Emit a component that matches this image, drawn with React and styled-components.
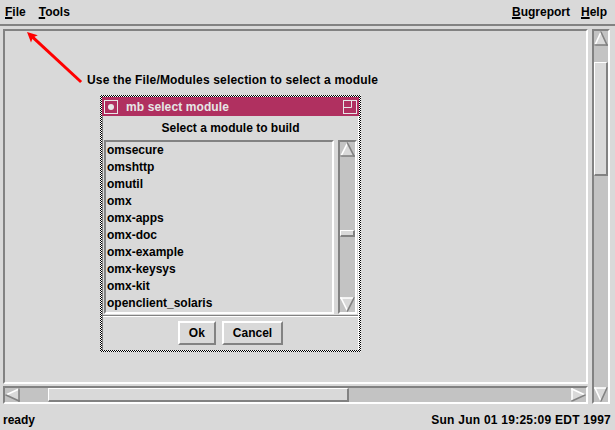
import React from 'react';
import styled, { createGlobalStyle } from 'styled-components';

const DARK = '#828282';
const LIGHT = '#ffffff';
const BG = '#d9d9d9';
const TROUGH = '#c3c3c3';
const FONT = '"Liberation Sans", Arial, Helvetica, sans-serif';

const GlobalStyle = createGlobalStyle`
  html, body { margin: 0; padding: 0; background: ${BG}; }
  body { font-family: ${FONT}; font-weight: bold; font-size: 12px; color: #000; }
  * { box-sizing: border-box; }
`;

const Screen = styled.div`
  position: relative;
  width: 615px;
  height: 430px;
  overflow: hidden;
  background: ${BG};
  display: flex;
  flex-direction: column;
`;

const MenuBar = styled.div`
  height: 26px;
  flex: none;
  border-bottom: 2px solid ${DARK};
  display: flex;
  align-items: flex-start;
  padding: 5px 8px 0 5px;
  line-height: 14px;
`;

const MenuGroup = styled.div`
  display: flex;
  gap: ${(p) => p.$gap}px;
`;

const Spacer = styled.div`
  flex: 1;
`;

const MenuItem = styled.span`
  white-space: nowrap;
`;

const Mnemonic = styled.span`
  text-decoration: underline;
  text-decoration-thickness: 2px;
  text-underline-offset: 1px;
`;

const Workspace = styled.div`
  flex: none;
  display: grid;
  grid-template-columns: 585px 18px;
  grid-template-rows: 355px 18px;
  column-gap: 4px;
  row-gap: 2px;
  padding: 3px 0 0 3px;
`;

const Canvas = styled.div`
  position: relative;
  grid-column: 1;
  grid-row: 1;
  border: 2px solid;
  border-color: ${DARK} ${LIGHT} ${LIGHT} ${DARK};
  background: ${BG};
`;

const CanvasDrawing = styled.svg`
  position: absolute;
  left: 0;
  top: 0;
  overflow: visible;
`;

const CanvasText = styled.div`
  position: absolute;
  left: ${(p) => p.$x}px;
  top: ${(p) => p.$y}px;
  line-height: 14px;
  letter-spacing: 0.17px;
  white-space: nowrap;
`;

const ScrollTrack = styled.div`
  display: flex;
  flex-direction: ${(p) => (p.$horizontal ? 'row' : 'column')};
  border: 2px solid;
  border-color: ${DARK} ${LIGHT} ${LIGHT} ${DARK};
  background: ${TROUGH};
  grid-row: ${(p) => p.$row || 'auto'};
  grid-column: ${(p) => p.$col || 'auto'};
  overflow: hidden;
`;

const Slider = styled.div`
  flex: none;
  background: ${BG};
  border-style: solid;
  border-width: 1px 2px 2px 1px;
  border-color: ${LIGHT} ${DARK} ${DARK} ${LIGHT};
  ${(p) =>
    p.$horizontal
      ? `width: ${p.$size}px; margin-left: ${p.$offset}px;`
      : `height: ${p.$size}px; margin-top: ${p.$offset}px;`}
`;

const TroughFill = styled.div`
  flex: 1;
`;

const ArrowBox = styled.svg`
  flex: none;
  display: block;
`;

const StatusBar = styled.div`
  flex: 1;
  display: flex;
  justify-content: space-between;
  padding: 9px 4px 0 3px;
  line-height: 14px;
`;

const StatusText = styled.span`
  letter-spacing: ${(p) => p.$spacing || 0}px;
  white-space: nowrap;
`;

const DialogWindow = styled.div`
  position: absolute;
  left: 100px;
  top: 95px;
  width: 261px;
  height: 257px;
  padding: 2px;
  background: repeating-conic-gradient(#000 0 25%, #fff 0 50%) 0 0 / 2px 2px;
  display: flex;
  flex-direction: column;
`;

const TitleBar = styled.div`
  height: 19px;
  flex: none;
  background: #b03060;
  color: #e6e6e6;
  display: flex;
  align-items: center;
  padding: 0 2px;
`;

const TitleText = styled.span`
  flex: 1;
  margin-left: 8px;
  padding-top: 1px;
  line-height: 14px;
  letter-spacing: 0.1px;
  white-space: nowrap;
`;

const DialogBody = styled.div`
  flex: 1;
  background: ${BG};
  display: flex;
  flex-direction: column;
  border-left: 1px solid ${DARK};
  border-right: 1px solid ${LIGHT};
`;

const Prompt = styled.div`
  padding-top: 5px;
  line-height: 14px;
  text-align: center;
`;

const ListRow = styled.div`
  display: flex;
  gap: 4px;
  height: 174px;
  margin: 5px 1px 0;
`;

const ListBox = styled.div`
  width: 230px;
  border: 2px solid;
  border-color: ${DARK} ${LIGHT} ${LIGHT} ${DARK};
  padding: 0 1px;
  overflow: hidden;
`;

const ListItem = styled.div`
  height: 17px;
  line-height: 17px;
  white-space: nowrap;
`;

const ButtonRow = styled.div`
  flex: 1;
  margin-top: 1px;
  border-top: 1px solid ${DARK};
  box-shadow: inset 0 1px 0 ${LIGHT};
  display: flex;
  justify-content: center;
  align-items: flex-start;
  gap: 6px;
  padding-top: 5px;
`;

const Button = styled.button`
  height: 24px;
  padding: 0 9px;
  font-family: ${FONT};
  font-weight: bold;
  font-size: 12px;
  line-height: 14px;
  color: #000;
  background: ${BG};
  border: 2px solid;
  border-color: ${LIGHT} ${DARK} ${DARK} ${LIGHT};
  border-radius: 0;
  cursor: pointer;
`;

function ScrollArrow({ dir, w, h }) {
  const a = 1;
  const x0 = a, y0 = a, x1 = w - a, y1 = h - a;
  const xm = w / 2, ym = h / 2;
  const shapes = {
    up: {
      pts: [[x0, y1], [xm, y0], [x1, y1]],
      light: [[[x0, y1], [xm, y0]]],
      dark: [[[xm, y0], [x1, y1]], [[x1, y1], [x0, y1]]],
    },
    down: {
      pts: [[x0, y0], [x1, y0], [xm, y1]],
      light: [[[x0, y0], [x1, y0]], [[x0, y0], [xm, y1]]],
      dark: [[[x1, y0], [xm, y1]]],
    },
    left: {
      pts: [[x1, y0], [x0, ym], [x1, y1]],
      light: [[[x1, y0], [x0, ym]]],
      dark: [[[x0, ym], [x1, y1]], [[x1, y1], [x1, y0]]],
    },
    right: {
      pts: [[x0, y0], [x1, ym], [x0, y1]],
      light: [[[x0, y1], [x0, y0]], [[x0, y0], [x1, ym]]],
      dark: [[[x1, ym], [x0, y1]]],
    },
  };
  const s = shapes[dir];
  return (
    <ArrowBox width={w} height={h} viewBox={`0 0 ${w} ${h}`}>
      <polygon points={s.pts.map((p) => p.join(',')).join(' ')} fill={BG} />
      {s.light.map(([p, q], i) => (
        <line key={'l' + i} x1={p[0]} y1={p[1]} x2={q[0]} y2={q[1]} stroke={LIGHT} strokeWidth="1.6" strokeLinecap="square" />
      ))}
      {s.dark.map(([p, q], i) => (
        <line key={'d' + i} x1={p[0]} y1={p[1]} x2={q[0]} y2={q[1]} stroke={DARK} strokeWidth="1.6" strokeLinecap="square" />
      ))}
    </ArrowBox>
  );
}

function Scrollbar({ horizontal, thickness, arrowLen, offset, size, row, col }) {
  const aw = horizontal ? arrowLen : thickness;
  const ah = horizontal ? thickness : arrowLen;
  return (
    <ScrollTrack $horizontal={horizontal} $row={row} $col={col}>
      <ScrollArrow dir={horizontal ? 'left' : 'up'} w={aw} h={ah} />
      <Slider $horizontal={horizontal} $offset={offset} $size={size} />
      <TroughFill />
      <ScrollArrow dir={horizontal ? 'right' : 'down'} w={aw} h={ah} />
    </ScrollTrack>
  );
}

function MenuEntry({ label }) {
  return (
    <MenuItem>
      <Mnemonic>{label[0]}</Mnemonic>
      {label.slice(1)}
    </MenuItem>
  );
}

const modules = [
  'omsecure',
  'omshttp',
  'omutil',
  'omx',
  'omx-apps',
  'omx-doc',
  'omx-example',
  'omx-keysys',
  'omx-kit',
  'openclient_solaris',
];

export default function App() {
  return (
    <Screen>
      <GlobalStyle />
      <MenuBar>
        <MenuGroup $gap={13}>
          <MenuEntry label="File" />
          <MenuEntry label="Tools" />
        </MenuGroup>
        <Spacer />
        <MenuGroup $gap={11}>
          <MenuEntry label="Bugreport" />
          <MenuEntry label="Help" />
        </MenuGroup>
      </MenuBar>

      <Workspace>
        <Canvas>
          <CanvasDrawing width="581" height="351">
            <g transform="translate(-5 -31)">
              <line x1="32.9" y1="37.4" x2="80" y2="81" stroke="#ff0000" strokeWidth="3" strokeLinecap="square" />
              <polygon points="27,32 31,42.5 32.9,37.4 37.8,35.2" fill="#ff0000" />
            </g>
          </CanvasDrawing>
          <CanvasText $x={82} $y={42}>
            Use the File/Modules selection to select a module
          </CanvasText>
        </Canvas>
        <Scrollbar thickness={14} arrowLen={15} offset={16} size={114} row="1 / span 2" col="2" />
        <Scrollbar horizontal thickness={14} arrowLen={15} offset={28} size={301} row="2" col="1" />
      </Workspace>

      <StatusBar>
        <StatusText>ready</StatusText>
        <StatusText $spacing={0.25}>Sun Jun 01 19:25:09 EDT 1997</StatusText>
      </StatusBar>

      <DialogWindow>
        <TitleBar>
          <svg width="14" height="14" viewBox="0 0 14 14">
            <rect x="0.5" y="0.5" width="13" height="13" fill="none" stroke="#e6e6e6" />
            <circle cx="7" cy="7" r="3" fill="#e6e6e6" />
          </svg>
          <TitleText>mb select module</TitleText>
          <svg width="14" height="14" viewBox="0 0 14 14">
            <rect x="0.5" y="0.5" width="13" height="13" fill="none" stroke="#e6e6e6" />
            <path d="M0.5 7.5 H8.5 V0.5" fill="none" stroke="#e6e6e6" />
          </svg>
        </TitleBar>
        <DialogBody>
          <Prompt>Select a module to build</Prompt>
          <ListRow>
            <ListBox>
              {modules.map((m) => (
                <ListItem key={m}>{m}</ListItem>
              ))}
            </ListBox>
            <Scrollbar thickness={15} arrowLen={15} offset={73} size={7} />
          </ListRow>
          <ButtonRow>
            <Button>Ok</Button>
            <Button>Cancel</Button>
          </ButtonRow>
        </DialogBody>
      </DialogWindow>
    </Screen>
  );
}
